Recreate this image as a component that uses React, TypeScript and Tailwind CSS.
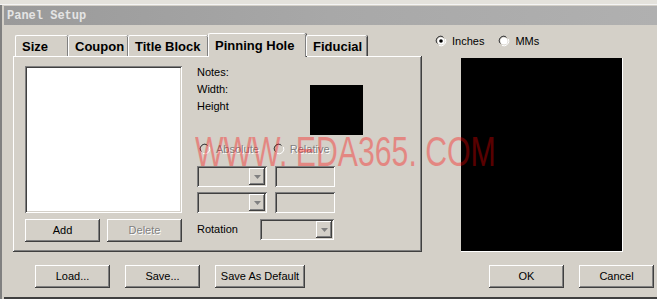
import React from 'react';

const raised =
  'shadow-[inset_-1px_-1px_#404040,inset_1px_1px_#ffffff,inset_-2px_-2px_#808080,inset_2px_2px_#d4d0c8]';
const sunken =
  'shadow-[inset_1px_1px_#808080,inset_-1px_-1px_#ffffff,inset_2px_2px_#404040,inset_-2px_-2px_#d4d0c8]';

const Radio = ({ checked, label, disabled }: { checked?: boolean; label: string; disabled?: boolean }) => (
  <div className="flex items-center gap-[5px]">
    <svg width="12" height="12" viewBox="0 0 12 12">
      <path d="M8 1.5 A5 5 0 0 0 1.5 8" stroke="#808080" fill="none" />
      <path d="M8.5 2.5 A4 4 0 0 0 2.5 8.5" stroke="#404040" fill="none" />
      <path d="M4 10.5 A5 5 0 0 0 10.5 4" stroke="#ffffff" fill="none" />
      <circle cx="6" cy="6" r="3.6" fill={disabled ? '#d4d0c8' : '#ffffff'} />
      {checked && <circle cx="6" cy="6" r="1.8" fill="#000" />}
    </svg>
    <span
      className={
        disabled
          ? 'text-[#808080] [text-shadow:1px_1px_0_#ffffff]'
          : 'text-black'
      }
    >
      {label}
    </span>
  </div>
);

const Combo = ({ w }: { w: string }) => (
  <div className={`${w} h-[21px] ${sunken} relative`}>
    <div className={`absolute right-[2px] top-[2px] w-[16px] h-[17px] bg-[#d4d0c8] ${raised} flex items-center justify-center`}>
      <svg width="7" height="4" viewBox="0 0 7 4">
        <path d="M0 0 H7 L3.5 4 Z" fill="#808080" />
      </svg>
    </div>
  </div>
);

const Btn = ({ label, disabled, w = 'w-[75px]' }: { label: string; disabled?: boolean; w?: string }) => (
  <div className={`${w} h-[23px] ${raised} flex items-center justify-center`}>
    <span className={disabled ? 'text-[#808080] [text-shadow:1px_1px_0_#ffffff]' : 'text-black'}>{label}</span>
  </div>
);

const tabs = [
  { label: 'Size', w: 'w-[53px]' },
  { label: 'Coupon', w: 'w-[60px]' },
  { label: 'Title Block', w: 'w-[80px]' },
  { label: 'Pinning Hole', w: 'w-[98px]', active: true },
  { label: 'Fiducial', w: 'w-[61px]' },
];

export default function App() {
  return (
    <div className="w-[657px] h-[299px] bg-[#d4d0c8] relative overflow-hidden font-['Liberation_Sans',Arial,sans-serif] text-[11px] leading-none">
      {/* strip behind the window */}
      <div className="h-[5px] bg-[#e4e2dc] border-b border-[#f4f4f4]" />
      <div className="flex h-[294px]">
        <div className="w-[4px] border-l-[2px] border-[#808080] bg-[#d4d0c8]" />
        <div className="flex-1 flex flex-col border-b-[2px] border-[#404040]">
          {/* title bar */}
          <div className="h-[19px] mt-[1px] bg-gradient-to-r from-[#9a9a9a] via-[#a8a8a8] to-[#b0b0b0] flex items-center pl-[3px]">
            <span className="font-['Liberation_Mono',monospace] font-bold text-[12px] text-[#e4e4e4]">
              Panel Setup
            </span>
          </div>

          <div className="flex">
            {/* left: tab control */}
            <div className="ml-[9px] mt-[8px] flex flex-col w-[409px]">
              <div className="flex items-end h-[23px] pl-[2px] relative z-10">
                {tabs.map((t) => (
                  <div
                    key={t.label}
                    className={`${t.w} ${
                      t.active ? 'h-[24px] -mb-[1px] bg-[#d4d0c8]' : 'h-[21px]'
                    } border-t border-l border-white shadow-[inset_-1px_0_#808080,1px_0_#404040] rounded-t-[2px] flex items-center pl-[6px]`}
                  >
                    <span className="font-bold text-[13px] text-black">{t.label}</span>
                  </div>
                ))}
              </div>
              <div className={`h-[196px] ${raised} bg-[#d4d0c8] flex pt-[10px] pl-[12px]`}>
                <div className="w-[157px] flex flex-col">
                  <div className={`h-[147px] bg-white ${sunken}`} />
                  <div className="flex justify-between mt-[6px]">
                    <Btn label="Add" />
                    <Btn label="Delete" disabled />
                  </div>
                </div>
                <div className="ml-[15px] flex flex-col">
                  <div className="flex">
                    <div className="flex flex-col gap-[6px] pt-[1px] w-[113px]">
                      <span>Notes:</span>
                      <span>Width:</span>
                      <span>Height</span>
                    </div>
                    <div className="w-[53px] h-[50px] bg-black mt-[19px]" />
                  </div>
                  <div className="flex gap-[14px] mt-[8px] pl-[2px]">
                    <Radio label="Absolute" disabled />
                    <Radio label="Relative" disabled />
                  </div>
                  <div className="flex gap-[8px] mt-[11px]">
                    <Combo w="w-[70px]" />
                    <div className={`w-[60px] h-[21px] ${sunken}`} />
                  </div>
                  <div className="flex gap-[8px] mt-[5px]">
                    <Combo w="w-[70px]" />
                    <div className={`w-[60px] h-[21px] ${sunken}`} />
                  </div>
                  <div className="flex items-center mt-[6px]">
                    <span className="w-[63px]">Rotation</span>
                    <Combo w="w-[74px]" />
                  </div>
                </div>
              </div>
            </div>

            {/* right: units + preview */}
            <div className="ml-[9px] flex flex-col">
              <div className="flex gap-[14px] mt-[10px] ml-[4px]">
                <Radio label="Inches" checked />
                <Radio label="MMs" />
              </div>
              <div className="ml-[30px] mt-[11px] w-[162px] h-[194px] bg-black border-r border-b border-white" />
            </div>
          </div>

          {/* bottom buttons */}
          <div className="flex mt-[13px] pl-[31px]">
            <Btn label="Load..." />
            <div className="ml-[15px]"><Btn label="Save..." /></div>
            <div className="ml-[15px]"><Btn label="Save As Default" w="w-[90px]" /></div>
            <div className="ml-[184px]"><Btn label="OK" /></div>
            <div className="ml-[15px]"><Btn label="Cancel" /></div>
          </div>
        </div>
      </div>

      {/* watermark */}
      <div className="absolute left-[195px] top-[131px] origin-left scale-x-[0.72] pointer-events-none whitespace-nowrap font-['Liberation_Sans',Arial,sans-serif] text-[42px] leading-none text-[#ff0000]/35">
        WWW. EDA365. COM
      </div>
    </div>
  );
}
